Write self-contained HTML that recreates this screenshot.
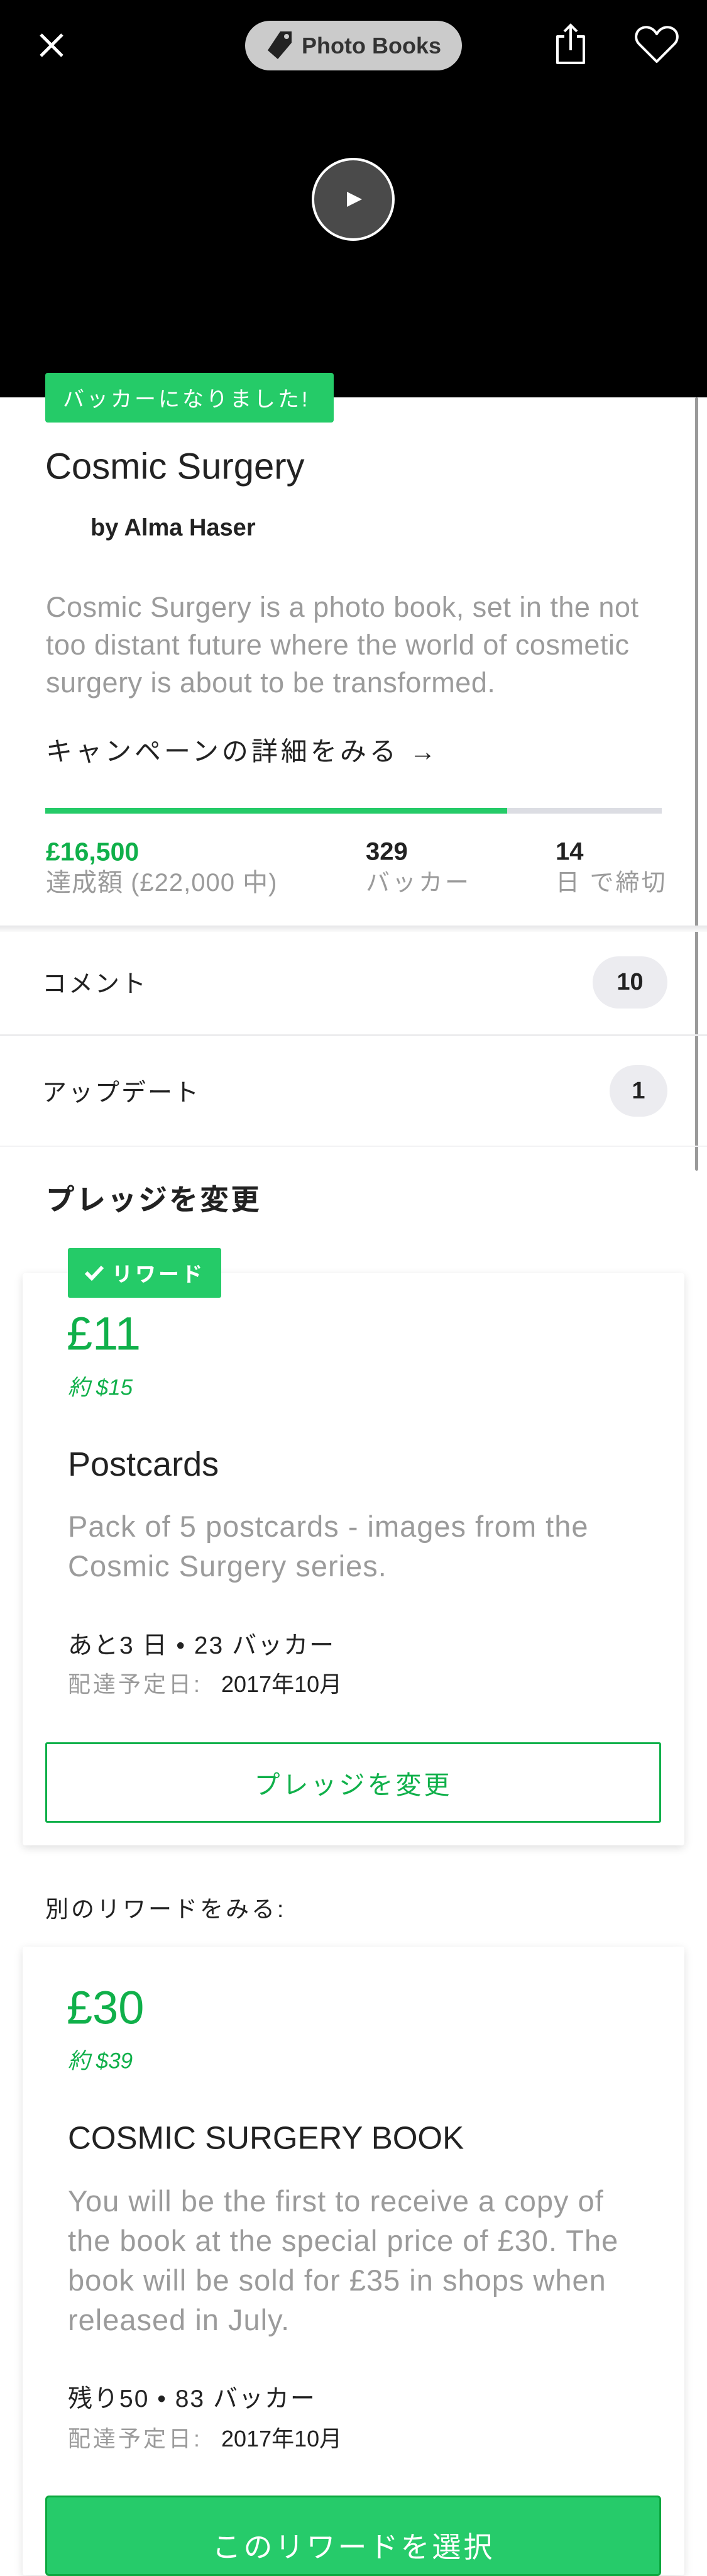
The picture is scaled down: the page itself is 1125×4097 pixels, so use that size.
<!DOCTYPE html>
<html><head><meta charset="utf-8"><style>
*{margin:0;padding:0;box-sizing:border-box}
body{width:1125px;height:4050px;overflow:hidden;background:#fff;font-family:"Liberation Sans","Noto Sans CJK JP",sans-serif;color:#222;position:relative}
.a{position:absolute;white-space:nowrap}
.mid{transform:translateY(-50%)}
.gray{color:#9b9b9b}
.green{color:#0ea73f}
.card{position:absolute;left:36px;width:1053px;background:#fff;box-shadow:0 4px 14px rgba(0,0,0,.13);border-radius:4px}
.sep{position:absolute;left:0;width:1125px;height:3px;background:#ececee}
.pill{position:absolute;background:#ececf0;border-radius:42px;font-size:38px;font-weight:bold;display:flex;align-items:center;justify-content:center;color:#222}
</style></head><body>
<div class="a" style="left:0;top:0;width:1125px;height:632px;background:#000"></div>
<svg class="a" style="left:60px;top:50px" width="44" height="44" viewBox="0 0 44 44"><path d="M5 5L39 39M39 5L5 39" stroke="#fff" stroke-width="5"/></svg>
<div class="a" style="left:390px;top:33px;width:345px;height:79px;background:#cbcbcb;border-radius:40px"></div>
<svg class="a" style="left:424px;top:48px" width="42" height="48" viewBox="0 0 42 48"><path d="M22 2L40 2L40 20L18 46L2 32Z" fill="#222"/><circle cx="32" cy="10" r="4" fill="#cbcbcb"/></svg>
<div class="a mid" style="left:480px;top:73px;font-size:36px;font-weight:bold;color:#333">Photo Books</div>
<svg class="a" style="left:880px;top:36px" width="56" height="68" viewBox="0 0 56 68"><path d="M18 22H7V64H49V22H38" fill="none" stroke="#fff" stroke-width="4" stroke-linejoin="round"/><path d="M28 44V4M18 14L28 4L38 14" fill="none" stroke="#fff" stroke-width="4"/></svg>
<svg class="a" style="left:1009px;top:40px" width="72" height="62" viewBox="0 0 72 62"><path d="M36 58L8 30C0 22 2 8 14 4C24 1 32 7 36 14C40 7 48 1 58 4C70 8 72 22 64 30Z" fill="none" stroke="#fff" stroke-width="4" stroke-linejoin="round"/></svg>
<div class="a" style="left:496px;top:251px;width:132px;height:132px;border-radius:50%;background:#4a4a4a;border:4px solid #fff"></div>
<svg class="a" style="left:550px;top:303px" width="28" height="28" viewBox="0 0 28 28"><path d="M2 2L26 14L2 26Z" fill="#fff"/></svg>

<div class="a" style="left:1106px;top:632px;width:5px;height:1230px;background:#9a9a9a;border-radius:3px"></div>

<div class="a" style="left:72px;top:593px;width:459px;height:79px;background:#25cb68;border-radius:4px"></div>
<div class="a mid" style="left:100px;top:632px;font-size:34px;color:#fff;letter-spacing:4px">バッカーになりました!</div>
<div class="a mid" style="left:72px;top:742px;font-size:58px">Cosmic Surgery</div>
<div class="a mid" style="left:144px;top:840px;font-size:38px;font-weight:bold">by Alma Haser</div>
<div class="a gray" style="left:73px;top:936px;font-size:45px;line-height:60px;letter-spacing:0.5px">Cosmic Surgery is a photo book, set in the not<br>too distant future where the world of cosmetic<br>surgery is about to be transformed.</div>
<div class="a mid" style="left:73px;top:1192px;font-size:42px;letter-spacing:5px">キャンペーンの詳細をみる →</div>
<div class="a" style="left:72px;top:1285px;width:981px;height:9px;background:#dcdde3"></div>
<div class="a" style="left:72px;top:1285px;width:735px;height:9px;background:#25cb68"></div>
<div class="a mid green" style="left:73px;top:1355px;font-size:41px;font-weight:bold;color:#10b04a">£16,500</div>
<div class="a mid gray" style="left:73px;top:1400px;font-size:40px;letter-spacing:1px">達成額 (£22,000 中)</div>
<div class="a mid" style="left:582px;top:1355px;font-size:40px;font-weight:bold">329</div>
<div class="a mid gray" style="left:582px;top:1400px;font-size:38px;letter-spacing:4px">バッカー</div>
<div class="a mid" style="left:884px;top:1355px;font-size:40px;font-weight:bold">14</div>
<div class="a mid gray" style="left:884px;top:1400px;font-size:38px;letter-spacing:3px">日 で締切</div>
<div class="a" style="left:0;top:1472px;width:1125px;height:10px;background:linear-gradient(#e6e6e8,#fafafa)"></div>

<div class="a mid" style="left:67px;top:1562px;font-size:39px;letter-spacing:3px">コメント</div>
<div class="pill" style="left:943px;top:1521px;width:119px;height:83px">10</div>
<div class="sep" style="top:1645px"></div>
<div class="a mid" style="left:67px;top:1735px;font-size:39px;letter-spacing:3px">アップデート</div>
<div class="pill" style="left:970px;top:1694px;width:92px;height:82px">1</div>
<div class="sep" style="top:1822px;height:2px;background:#f2f2f4"></div>
<div class="a mid" style="left:73px;top:1905px;font-size:46px;font-weight:bold;letter-spacing:3px">プレッジを変更</div>

<div class="card" style="top:2025px;height:910px"></div>
<div class="a" style="left:108px;top:1985px;width:244px;height:79px;background:#25cb68;border-radius:3px"></div>
<svg class="a" style="left:134px;top:2010px" width="32" height="28" viewBox="0 0 32 28"><path d="M3 14L12 23L29 5" fill="none" stroke="#fff" stroke-width="6"/></svg>
<div class="a mid" style="left:178px;top:2024px;font-size:33px;color:#fff;font-weight:bold;letter-spacing:4px">リワード</div>
<div class="a mid" style="left:106px;top:2121px;font-size:74px;color:#10b04a">£11</div>
<div class="a mid" style="left:108px;top:2204px;font-size:35px;color:#10b04a;font-style:italic">約 $15</div>
<div class="a mid" style="left:108px;top:2329px;font-size:54px">Postcards</div>
<div class="a gray" style="left:108px;top:2396px;font-size:47px;line-height:63px;letter-spacing:1px">Pack of 5 postcards - images from the<br>Cosmic Surgery series.</div>
<div class="a mid" style="left:108px;top:2614px;font-size:39px;letter-spacing:2px">あと3 日 • 23 バッカー</div>
<div class="a mid" style="left:108px;top:2676px;font-size:36px"><span class="gray" style="letter-spacing:4px">配達予定日:</span>&nbsp;&nbsp; 2017年10月</div>
<div class="a" style="left:72px;top:2771px;width:980px;height:128px;border:3px solid #10b04a;border-radius:3px;display:flex;align-items:center;justify-content:center;font-size:41px;color:#10b04a;letter-spacing:4px">プレッジを変更</div>

<div class="a mid" style="left:72px;top:3033px;font-size:37px;letter-spacing:4px">別のリワードをみる:</div>
<div class="card" style="top:3096px;height:1000px"></div>
<div class="a mid" style="left:106px;top:3193px;font-size:74px;color:#10b04a">£30</div>
<div class="a mid" style="left:108px;top:3275px;font-size:35px;color:#10b04a;font-style:italic">約 $39</div>
<div class="a mid" style="left:108px;top:3400px;font-size:51px">COSMIC SURGERY BOOK</div>
<div class="a gray" style="left:108px;top:3469px;font-size:47px;line-height:63px;letter-spacing:1px">You will be the first to receive a copy of<br>the book at the special price of £30. The<br>book will be sold for £35 in shops when<br>released in July.</div>
<div class="a mid" style="left:108px;top:3812px;font-size:39px;letter-spacing:2px">残り50 • 83 バッカー</div>
<div class="a mid" style="left:108px;top:3876px;font-size:36px"><span class="gray" style="letter-spacing:4px">配達予定日:</span>&nbsp;&nbsp; 2017年10月</div>
<div class="a" style="left:72px;top:3969px;width:980px;height:128px;background:#26cb6a;border:3px solid #0ca83f;border-radius:6px"></div>
<div class="a mid" style="left:0;width:1125px;text-align:center;top:4048px;font-size:46px;color:#fff;letter-spacing:4px">このリワードを選択</div>
</body></html>
